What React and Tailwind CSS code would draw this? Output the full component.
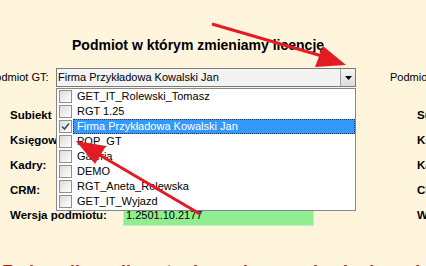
import React from "react";

// lista podmiotów w rozwiniętym comboboxie
const podmioty = [
  { name: "GET_IT_Rolewski_Tomasz", checked: false },
  { name: "RGT 1.25", checked: false },
  { name: "Firma Przykładowa Kowalski Jan", checked: true, selected: true },
  { name: "POP_GT", checked: false },
  { name: "Galeria", checked: false },
  { name: "DEMO", checked: false },
  { name: "RGT_Aneta_Rolewska", checked: false },
  { name: "GET_IT_Wyjazd", checked: false },
];

const labels = [
  { left: "Subiekt", right: "Subiekt" },
  { left: "Księgowość:", right: "Księgowość:" },
  { left: "Kadry:", right: "Kadry:" },
  { left: "CRM:", right: "CRM:" },
];

function Checkbox({ checked }) {
  return (
    <div className="w-[13px] h-[13px] shrink-0 border border-[#8e8f8f] bg-gradient-to-br from-[#dcdcd7] to-white flex items-center justify-center">
      {checked && (
        <svg width="9" height="9" viewBox="0 0 9 9">
          <path d="M1 4.5 L3.5 7 L8 1.5" fill="none" stroke="#3b4a78" strokeWidth="1.6" />
        </svg>
      )}
    </div>
  );
}

export default function App() {
  return (
    <div className="relative w-[426px] h-[266px] overflow-hidden bg-[#fef5dc] text-black font-['Liberation_Sans',Arial,sans-serif]">
      <div className="pt-[37px] pl-[72px] text-[14px] font-bold leading-[16px] whitespace-nowrap">
        Podmiot w którym zmieniamy licencję
      </div>

      {/* wiersz z comboboxem */}
      <div className="mt-[15px] flex items-center h-[19px] text-[11px] whitespace-nowrap">
        <div className="ml-[-12px] w-[68px] shrink-0">Podmiot GT:</div>
        <div className="w-[300px] h-[19px] shrink-0 flex border border-[#7a7a7a] bg-[#f3f3f3]">
          <div className="flex-1 pl-[1px] leading-[17px]">Firma Przykładowa Kowalski Jan</div>
          <div className="w-[15px] h-[17px] border-l border-[#a0a0a0] bg-gradient-to-b from-[#f6f6f6] to-[#dcdcdc] flex items-center justify-center">
            <svg width="7" height="4" viewBox="0 0 7 4">
              <path d="M0 0 L7 0 L3.5 4 Z" fill="#000" />
            </svg>
          </div>
        </div>
        <div className="ml-[34px] shrink-0">Podmiot GT:</div>
      </div>

      {/* etykiety */}
      <div className="mt-[16px] flex text-[11.5px] font-bold whitespace-nowrap">
        <div className="w-[417px] shrink-0 pl-[10px]">
          {labels.map((l) => (
            <div key={l.left} className="h-[25px] flex items-center">
              {l.left}
            </div>
          ))}
          <div className="h-[25px] flex items-center">
            <div className="w-[113px]">Wersja podmiotu:</div>
            <div className="w-[191px] h-[20px] bg-[#90ee90] border border-[#c6ecc6] pl-[2px] flex items-center font-normal text-[11px]">
              1.2501.10.2177
            </div>
          </div>
        </div>
        <div className="shrink-0">
          {labels.map((l) => (
            <div key={l.right} className="h-[25px] flex items-center">
              {l.right}
            </div>
          ))}
          <div className="h-[25px] flex items-center">Wersja podmiotu:</div>
        </div>
      </div>

      <div className="mt-[35px] pl-[2px] text-[18px] leading-[18px] font-bold text-[#c0141c] whitespace-nowrap">
        Zmiana licencji zostanie zapisana w bazie danych podmiotu
      </div>

      {/* rozwinięta lista */}
      <div className="absolute left-[56px] top-[88px] w-[300px] h-[123px] border border-[#828790] bg-white py-0 text-[11px] whitespace-nowrap">
        {podmioty.map((p) => (
          <div key={p.name} className="h-[15px] flex items-center pl-[2px]">
            <Checkbox checked={p.checked} />
            <div
              className={
                p.selected
                  ? "ml-[1px] flex-1 h-[15px] pl-[3px] leading-[13px] bg-[#3399ff] text-white border border-dotted border-[#1a3c66]"
                  : "ml-[1px] flex-1 pl-[4px] leading-[15px]"
              }
            >
              {p.name}
            </div>
          </div>
        ))}
      </div>

      {/* czerwone strzałki */}
      <svg className="absolute inset-0 pointer-events-none" width="426" height="266" viewBox="0 0 426 266">
        <line x1="212" y1="24" x2="322" y2="56" stroke="#e31b23" strokeWidth="3" />
        <polygon points="346,65 323,46 315,67" fill="#e31b23" />
        <line x1="200" y1="214" x2="98" y2="154" stroke="#e31b23" strokeWidth="3" />
        <polygon points="76,141 106,146 95,164" fill="#e31b23" />
      </svg>
    </div>
  );
}
